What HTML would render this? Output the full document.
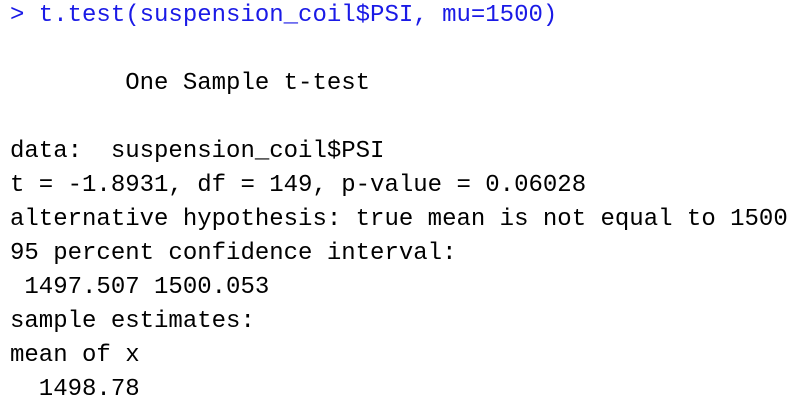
<!DOCTYPE html>
<html><head><style>
html,body{margin:0;padding:0;background:#fff;width:808px;height:416px;overflow:hidden}
pre{margin:0;position:absolute;left:10px;top:-1px;font-family:"Liberation Mono",monospace;font-size:24px;line-height:34px;color:#000}
.b{color:#1a1ae6}
</style></head><body>
<pre><span class="b">&gt; t.test(suspension_coil$PSI, mu=1500)</span>

        One Sample t-test

data:  suspension_coil$PSI
t = -1.8931, df = 149, p-value = 0.06028
alternative hypothesis: true mean is not equal to 1500
95 percent confidence interval:
 1497.507 1500.053
sample estimates:
mean of x 
  1498.78 </pre>
</body></html>
